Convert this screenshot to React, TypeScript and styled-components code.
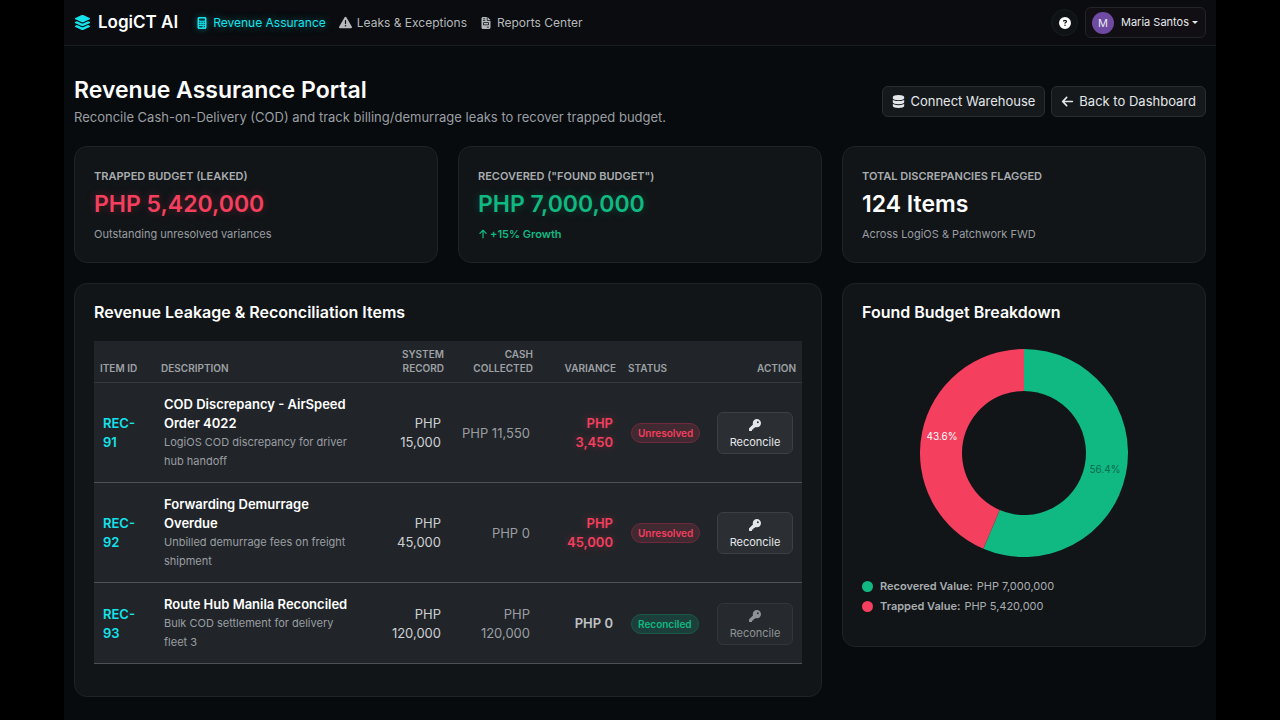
import React from "react";
import styled, { createGlobalStyle, css } from "styled-components";
import {
  FaArrowLeft,
  FaArrowUp,
  FaCalculator,
  FaCircleQuestion,
  FaDatabase,
  FaFileInvoice,
  FaKey,
  FaLayerGroup,
  FaTriangleExclamation,
} from "react-icons/fa6";

const color = {
  cyan: "#14e3ec",
  red: "#f43f5e",
  green: "#10b981",
  text: "#e4e7ea",
  muted: "#9a9ea2",
  line: "#1f2326",
};

const GlobalStyle = createGlobalStyle`
  * { box-sizing: border-box; }
  body {
    margin: 0;
    background: #000;
    color: ${color.text};
    font-family: Inter, "Liberation Sans", sans-serif;
    font-size: 13px;
    line-height: 19px;
  }
  h1, h2, p { margin: 0; }
  button { font: inherit; cursor: pointer; }
  button:disabled { cursor: default; }
`;

const Shell = styled.div`
  width: 90%;
  min-height: 100vh;
  margin: 0 auto;
  background: #070b0e;
`;

const TopBar = styled.header`
  display: flex;
  align-items: center;
  justify-content: space-between;
  height: 46px;
  padding: 0 10px;
  background: #0a0c0f;
  border-bottom: 1px solid #1a1e20;
`;

const TopGroup = styled.div`
  display: flex;
  align-items: center;
  gap: 7px;
`;

const Brand = styled.a`
  display: flex;
  align-items: center;
  gap: 7px;
  margin-right: 11px;
  color: #fff;
  font-size: 17px;
  font-weight: 600;
  text-decoration: none;

  svg { color: ${color.cyan}; }
`;

const Nav = styled.nav`
  display: flex;
  gap: 13px;
`;

const NavLink = styled.a<{ $active?: boolean }>`
  display: flex;
  align-items: center;
  gap: 5px;
  color: #b4b8bb;
  font-size: 12px;
  text-decoration: none;
  ${(p) =>
    p.$active &&
    css`
      color: ${color.cyan};
      text-shadow: 0 0 8px rgba(20, 227, 236, 0.5);
      svg { filter: drop-shadow(0 0 3px rgba(20, 227, 236, 0.5)); }
    `}
`;

const HelpButton = styled.button`
  display: flex;
  align-items: center;
  justify-content: center;
  width: 27px;
  height: 27px;
  padding: 0;
  border: 1px solid #1a1d20;
  border-radius: 50%;
  background: #0f1215;
  color: #fff;
`;

const UserButton = styled.button`
  display: flex;
  align-items: center;
  height: 31px;
  padding: 0 7px 0 6px;
  border: 1px solid #24252a;
  border-radius: 6px;
  background: #120f14;
  color: ${color.text};
  font-size: 11px;
`;

const Avatar = styled.span`
  width: 22px;
  margin-right: 7px;
  border-radius: 50%;
  background: #6f4aa3;
  font-size: 11px;
  line-height: 22px;
  text-align: center;
`;

const Caret = styled.span`
  margin-left: 3px;
  border: 3px solid transparent;
  border-top-color: currentColor;
  border-bottom: 0;
`;

const Main = styled.main`
  padding: 30px 10px 24px;
`;

const PageHead = styled.div`
  display: flex;
  align-items: center;
  justify-content: space-between;
  margin-bottom: 19px;
`;

const PageTitle = styled.h1`
  color: #fff;
  font-size: 23px;
  font-weight: 600;
  line-height: 28px;
`;

const PageText = styled.p`
  margin-top: 4px;
  color: ${color.muted};
`;

const Actions = styled.div`
  display: flex;
  gap: 6px;
`;

const ActionButton = styled.button`
  display: flex;
  align-items: center;
  gap: 5px;
  height: 31px;
  padding: 0 9px;
  border: 1px solid #2a2e31;
  border-radius: 6px;
  background: #15191c;
  color: ${color.text};
`;

const Grid = styled.div`
  display: grid;
  grid-template-columns: repeat(3, 1fr);
  align-items: start;
  gap: 20px;
`;

const Card = styled.section<{ $wide?: boolean }>`
  grid-column: ${(p) => (p.$wide ? "span 2" : "auto")};
  padding: 19px 19px 30px;
  border: 1px solid ${color.line};
  border-radius: 13px;
  background: #111518;
`;

const StatCard = styled(Card)`
  padding: 21px 19px 20px;
`;

const StatLabel = styled.h2`
  color: #aaadb0;
  font-size: 11px;
  font-weight: 600;
  line-height: 16px;
  text-transform: uppercase;
`;

const StatValue = styled.p<{ $tone: string; $glow?: string }>`
  margin: 6px 0 8px;
  color: ${(p) => p.$tone};
  font-size: 23px;
  font-weight: 600;
  line-height: 28px;
  text-shadow: ${(p) => (p.$glow ? `0 0 10px ${p.$glow}` : "none")};
`;

const StatNote = styled.p<{ $up?: boolean }>`
  display: flex;
  align-items: center;
  gap: 2px;
  color: ${(p) => (p.$up ? color.green : color.muted)};
  font-size: 11px;
  font-weight: ${(p) => (p.$up ? 600 : 400)};
  line-height: 16px;
`;

const CardTitle = styled.h2`
  margin-bottom: 20px;
  color: #fff;
  font-size: 16px;
  font-weight: 600;
  line-height: 18px;
`;

const Table = styled.table`
  width: 100%;
  margin-bottom: 2px;
  border-collapse: separate;
  border-spacing: 0;
  table-layout: fixed;
  background: #212529;
`;

const Col = styled.col<{ $w?: number }>`
  width: ${(p) => (p.$w ? `${p.$w}px` : "auto")};
`;

const Th = styled.th<{ $right?: boolean }>`
  padding: 6px 6px 7px;
  border-bottom: 1px solid #34383b;
  color: #9da1a5;
  font-size: 10px;
  font-weight: 600;
  line-height: 14px;
  text-align: ${(p) => (p.$right ? "right" : "left")};
  text-transform: uppercase;
  vertical-align: bottom;
`;

const Td = styled.td<{ $right?: boolean; $tone?: string; $bold?: boolean; $glow?: boolean }>`
  padding: 12px 9px 11px;
  border-bottom: 1px solid #4d5154;
  color: ${(p) => p.$tone ?? color.text};
  font-weight: ${(p) => (p.$bold ? 600 : 400)};
  text-align: ${(p) => (p.$right ? "right" : "left")};
  text-shadow: ${(p) => (p.$glow ? "0 0 8px rgba(244, 63, 94, 0.4)" : "none")};
  vertical-align: middle;
`;

const ItemName = styled.div`
  color: #fff;
  font-weight: 600;
`;

const ItemNote = styled.div`
  color: ${color.muted};
  font-size: 11px;
`;

const Badge = styled.span<{ $done: boolean }>`
  display: inline-block;
  padding: 0 6px;
  border: 1px solid ${(p) => (p.$done ? "#1b5848" : "#70293c")};
  border-radius: 10px;
  background: ${(p) => (p.$done ? "#1d3f3b" : "#412932")};
  color: ${(p) => (p.$done ? color.green : color.red)};
  font-size: 10px;
  font-weight: 600;
  line-height: 18px;
`;

const RowButton = styled.button`
  display: flex;
  flex-direction: column;
  align-items: center;
  gap: 2px;
  width: 100%;
  padding: 6px 0 1px;
  border: 1px solid #3c4043;
  border-radius: 6px;
  background: #2b2f33;
  color: ${color.text};
  font-size: 11px;
  text-shadow: none;

  &:disabled {
    border-color: #33373a;
    background: #262a2e;
    color: #8f9396;
  }
`;

const Chart = styled.svg`
  display: block;
  width: 208px;
  height: 208px;
  margin: 28px auto 19px;
  font-size: 10px;
`;

const Legend = styled.ul`
  margin: 0;
  padding: 0;
  list-style: none;
`;

const LegendItem = styled.li<{ $tone: string }>`
  display: flex;
  align-items: center;
  color: #aaadb0;
  font-size: 11px;
  line-height: 20px;

  &::before {
    width: 11px;
    height: 11px;
    margin-right: 7px;
    border-radius: 50%;
    background: ${(p) => p.$tone};
    content: "";
  }

  b {
    margin-right: 4px;
    font-weight: 600;
  }
`;

const items = [
  {
    id: "REC-91",
    name: "COD Discrepancy - AirSpeed Order 4022",
    note: "LogiOS COD discrepancy for driver hub handoff",
    system: "PHP 15,000",
    cash: "PHP 11,550",
    variance: "PHP 3,450",
    done: false,
  },
  {
    id: "REC-92",
    name: "Forwarding Demurrage Overdue",
    note: "Unbilled demurrage fees on freight shipment",
    system: "PHP 45,000",
    cash: "PHP 0",
    variance: "PHP 45,000",
    done: false,
  },
  {
    id: "REC-93",
    name: "Route Hub Manila Reconciled",
    note: "Bulk COD settlement for delivery fleet 3",
    system: "PHP 120,000",
    cash: "PHP 120,000",
    variance: "PHP 0",
    done: true,
  },
];

const OUTER = 104;
const INNER = 62;

function ringPoint(radius: number, share: number) {
  const angle = share * 2 * Math.PI;
  return `${OUTER + radius * Math.sin(angle)} ${OUTER - radius * Math.cos(angle)}`;
}

function slice(from: number, to: number) {
  const large = to - from > 0.5 ? 1 : 0;
  return [
    `M ${ringPoint(OUTER, from)}`,
    `A ${OUTER} ${OUTER} 0 ${large} 1 ${ringPoint(OUTER, to)}`,
    `L ${ringPoint(INNER, to)}`,
    `A ${INNER} ${INNER} 0 ${large} 0 ${ringPoint(INNER, from)}`,
    "Z",
  ].join(" ");
}

function Donut() {
  return (
    <Chart viewBox="0 0 208 208" role="img" aria-label="Recovered 56.4%, trapped 43.6%">
      <path d={slice(0, 0.564)} fill={color.green} />
      <path d={slice(0.564, 1)} fill={color.red} />
      <text x="185" y="124" textAnchor="middle" fill="#0b6b50">
        56.4%
      </text>
      <text x="22" y="91" textAnchor="middle" fill="#fff">
        43.6%
      </text>
    </Chart>
  );
}

export default function App() {
  return (
    <Shell>
      <GlobalStyle />
      <TopBar>
        <TopGroup>
          <Brand href="#">
            <FaLayerGroup size={17} />
            LogiCT AI
          </Brand>
          <Nav>
            <NavLink href="#revenue" $active>
              <FaCalculator size={12} />
              Revenue Assurance
            </NavLink>
            <NavLink href="#leaks">
              <FaTriangleExclamation size={13} />
              Leaks &amp; Exceptions
            </NavLink>
            <NavLink href="#reports">
              <FaFileInvoice size={12} />
              Reports Center
            </NavLink>
          </Nav>
        </TopGroup>
        <TopGroup>
          <HelpButton aria-label="Help">
            <FaCircleQuestion size={12} />
          </HelpButton>
          <UserButton aria-haspopup="menu">
            <Avatar>M</Avatar>
            Maria Santos
            <Caret />
          </UserButton>
        </TopGroup>
      </TopBar>

      <Main>
        <PageHead>
          <div>
            <PageTitle>Revenue Assurance Portal</PageTitle>
            <PageText>
              Reconcile Cash-on-Delivery (COD) and track billing/demurrage leaks to recover trapped
              budget.
            </PageText>
          </div>
          <Actions>
            <ActionButton>
              <FaDatabase size={13} />
              Connect Warehouse
            </ActionButton>
            <ActionButton>
              <FaArrowLeft size={13} />
              Back to Dashboard
            </ActionButton>
          </Actions>
        </PageHead>

        <Grid>
          <StatCard>
            <StatLabel>Trapped Budget (Leaked)</StatLabel>
            <StatValue $tone={color.red} $glow="rgba(244, 63, 94, 0.3)">
              PHP 5,420,000
            </StatValue>
            <StatNote>Outstanding unresolved variances</StatNote>
          </StatCard>
          <StatCard>
            <StatLabel>Recovered ("Found Budget")</StatLabel>
            <StatValue $tone={color.green} $glow="rgba(16, 185, 129, 0.3)">
              PHP 7,000,000
            </StatValue>
            <StatNote $up>
              <FaArrowUp size={10} />
              +15% Growth
            </StatNote>
          </StatCard>
          <StatCard>
            <StatLabel>Total Discrepancies Flagged</StatLabel>
            <StatValue $tone="#fff">124 Items</StatValue>
            <StatNote>Across LogiOS &amp; Patchwork FWD</StatNote>
          </StatCard>

          <Card $wide>
            <CardTitle>Revenue Leakage &amp; Reconciliation Items</CardTitle>
            <Table>
              <colgroup>
                <Col $w={61} />
                <Col />
                <Col $w={87} />
                <Col $w={89} />
                <Col $w={83} />
                <Col $w={86} />
                <Col $w={94} />
              </colgroup>
              <thead>
                <tr>
                  <Th>Item ID</Th>
                  <Th>Description</Th>
                  <Th $right>System Record</Th>
                  <Th $right>Cash Collected</Th>
                  <Th $right>Variance</Th>
                  <Th>Status</Th>
                  <Th $right>Action</Th>
                </tr>
              </thead>
              <tbody>
                {items.map((item) => (
                  <tr key={item.id}>
                    <Td $tone={color.cyan} $bold>
                      {item.id}
                    </Td>
                    <Td>
                      <ItemName>{item.name}</ItemName>
                      <ItemNote>{item.note}</ItemNote>
                    </Td>
                    <Td $right $tone="#cdd0d2">
                      {item.system}
                    </Td>
                    <Td $right $tone={color.muted}>
                      {item.cash}
                    </Td>
                    <Td $right $bold $tone={item.done ? "#bfc2c5" : color.red} $glow={!item.done}>
                      {item.variance}
                    </Td>
                    <Td>
                      <Badge $done={item.done}>{item.done ? "Reconciled" : "Unresolved"}</Badge>
                    </Td>
                    <Td>
                      <RowButton disabled={item.done}>
                        <FaKey size={12} />
                        Reconcile
                      </RowButton>
                    </Td>
                  </tr>
                ))}
              </tbody>
            </Table>
          </Card>

          <Card>
            <CardTitle>Found Budget Breakdown</CardTitle>
            <Donut />
            <Legend>
              <LegendItem $tone={color.green}>
                <b>Recovered Value:</b> PHP 7,000,000
              </LegendItem>
              <LegendItem $tone={color.red}>
                <b>Trapped Value:</b> PHP 5,420,000
              </LegendItem>
            </Legend>
          </Card>
        </Grid>
      </Main>
    </Shell>
  );
}
